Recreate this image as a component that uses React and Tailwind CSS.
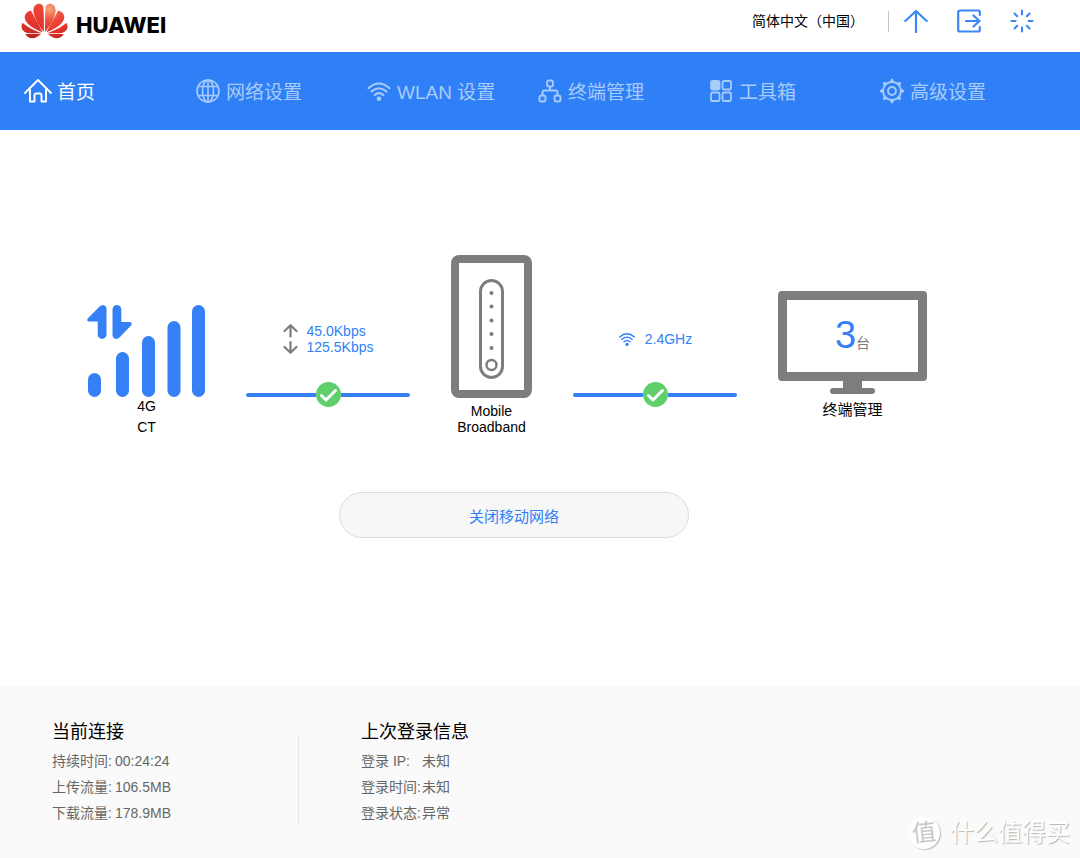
const navItems = [
  { label: '首页', icon: HomeIcon, active: true },
  { label: '网络设置', icon: GlobeIcon },
  { label: 'WLAN 设置', icon: WifiIcon },
  { label: '终端管理', icon: DevicesIcon },
  { label: '工具箱', icon: ToolboxIcon },
  { label: '高级设置', icon: GearIcon },
];

const currentConnection = [
  { label: '持续时间:', value: '00:24:24' },
  { label: '上传流量:', value: '106.5MB' },
  { label: '下载流量:', value: '178.9MB' },
];

const lastLogin = [
  { label: '登录 IP:', value: '未知' },
  { label: '登录时间:', value: '未知' },
  { label: '登录状态:', value: '异常' },
];

function HomeIcon() {
  return (
    <svg width="28" height="26" viewBox="0 0 28 26" fill="none" stroke="currentColor" strokeWidth="1.9" strokeLinecap="round" strokeLinejoin="round">
      <path d="M1 15 L14 2 L27 15" />
      <path d="M6 12 V23.5 H10.5 V17.5 Q10.5 15.5 12.3 15.5 H15.7 Q17.5 15.5 17.5 17.5 V23.5 H22 V12" />
    </svg>
  );
}

function GlobeIcon() {
  return (
    <svg width="26" height="26" viewBox="0 0 26 26" fill="none" stroke="currentColor" strokeWidth="1.6">
      <circle cx="13" cy="13" r="11" />
      <ellipse cx="13" cy="13" rx="5.5" ry="11" />
      <path d="M13 2 V24 M3.5 8.5 H22.5 M3.5 17.5 H22.5" />
    </svg>
  );
}

function WifiIcon({ size = 26 }) {
  return (
    <svg width={size} height={size} viewBox="0 0 26 26" fill="none" stroke="currentColor" strokeWidth="2" strokeLinecap="round">
      <path d="M2.5 10.2 Q13 0.8 23.5 10.2" />
      <path d="M5.5 13.6 Q13 7 20.5 13.6" />
      <path d="M8.6 17 Q13 13.2 17.4 17" />
      <circle cx="13" cy="20.8" r="2.3" fill="currentColor" stroke="none" />
    </svg>
  );
}

function DevicesIcon() {
  return (
    <svg width="26" height="26" viewBox="0 0 26 26" fill="none" stroke="currentColor" strokeWidth="1.9" strokeLinejoin="round">
      <rect x="10" y="2.5" width="6" height="6" rx="2" />
      <rect x="2.5" y="17.5" width="6" height="6" rx="2" />
      <rect x="17.5" y="17.5" width="6" height="6" rx="2" />
      <path d="M13 8.5 V12.5 M5.5 17.5 V14.5 Q5.5 12.5 7.5 12.5 H18.5 Q20.5 12.5 20.5 14.5 V17.5" />
    </svg>
  );
}

function ToolboxIcon() {
  return (
    <svg width="26" height="26" viewBox="0 0 26 26" fill="none" stroke="currentColor" strokeWidth="1.8">
      <rect x="3" y="3" width="8.5" height="8.5" rx="1.5" fill="currentColor" />
      <rect x="14.5" y="3" width="8.5" height="8.5" rx="1.5" />
      <rect x="3" y="14.5" width="8.5" height="8.5" rx="1.5" />
      <rect x="14.5" y="14.5" width="8.5" height="8.5" rx="1.5" />
    </svg>
  );
}

function GearIcon() {
  const teeth = [0, 45, 90, 135, 180, 225, 270, 315];
  return (
    <svg width="26" height="26" viewBox="0 0 26 26" fill="none" stroke="currentColor" strokeWidth="1.9">
      <circle cx="13" cy="13" r="9" />
      <circle cx="13" cy="13" r="4" />
      {teeth.map((angle) => (
        <path key={angle} d="M10.8 4 L12.2 0.8 H13.8 L15.2 4 Z" fill="currentColor" stroke="none" transform={`rotate(${angle} 13 13)`} />
      ))}
    </svg>
  );
}

function Logo() {
  const petals = [
    'M137 94 C136 62 137 32 139 17 Q142 8 152 9 C165 10 170 22 168 36 C163 58 151 77 137 94 Z',
    'M141 95 C152 72 166 48 176 29 Q194 34 195 50 C193 71 166 86 141 95 Z',
    'M142 98 C165 90 190 77 201 66 Q208 79 201 88 Q193 98 180 98 Z',
    'M146 100 H193 Q187 112 172 113 Q158 112 146 100 Z',
  ];
  return (
    <a href="#home" className="flex items-center gap-2" aria-label="HUAWEI">
      <svg width="47" height="36" viewBox="64 7 142 108">
        <defs>
          <radialGradient id="petal" gradientUnits="userSpaceOnUse" cx="151" cy="24" r="100">
            <stop offset="0" stopColor="#f7a877" />
            <stop offset="0.35" stopColor="#ee4f3c" />
            <stop offset="0.7" stopColor="#e5322b" />
            <stop offset="1" stopColor="#b9241f" />
          </radialGradient>
          <linearGradient id="petalLeft" gradientUnits="userSpaceOnUse" x1="140" y1="10" x2="160" y2="113">
            <stop offset="0" stopColor="#f04a3a" />
            <stop offset="0.7" stopColor="#e3302a" />
            <stop offset="1" stopColor="#b9241f" />
          </linearGradient>
        </defs>
        <g fill="url(#petal)">
          {petals.map((d) => <path key={d} d={d} />)}
        </g>
        <g fill="url(#petalLeft)" transform="translate(270 0) scale(-1 1)">
          {petals.map((d) => <path key={d} d={d} />)}
        </g>
      </svg>
      <span className="mt-2 font-['Inter',sans-serif] text-[22px] font-extrabold leading-6">HUAWEI</span>
    </a>
  );
}

function Header() {
  return (
    <header className="flex h-[52px] items-start justify-between pl-[21px] pr-[46px] pt-[3px]">
      <Logo />
      <div className="flex h-9 items-center">
        <button type="button" className="text-sm">简体中文（中国）</button>
        <span className="ml-6 mr-[15px] h-[21px] w-px bg-[#c4c4c4]" />
        <div className="flex items-center gap-[29px] text-[#3d87f5]">
          <button type="button" title="更新">
            <svg width="24" height="24" viewBox="0 0 24 24" fill="none" stroke="currentColor" strokeWidth="2.2" strokeLinecap="round" strokeLinejoin="round">
              <path d="M12 23 V2 M1.3 12 L12 2 L22.7 12" />
            </svg>
          </button>
          <button type="button" title="注销">
            <svg width="24" height="24" viewBox="0 0 24 24" fill="none" stroke="currentColor" strokeWidth="2.2" strokeLinecap="round" strokeLinejoin="round">
              <path d="M22.8 6 V3 Q22.8 1.5 21.3 1.5 H3 Q1.2 1.5 1.2 3.3 V20.7 Q1.2 22.5 3 22.5 H21.3 Q22.8 22.5 22.8 21 V18" />
              <path d="M9 12 H22.5 M16.5 6.5 L22.5 12 L16.5 17.5" />
            </svg>
          </button>
          <button type="button" title="加载">
            <svg width="24" height="24" viewBox="0 0 24 24" fill="none" stroke="currentColor" strokeWidth="2.1" strokeLinecap="round">
              <path d="M12 1.5 V5.5 M12 18.5 V22.5 M1.5 12 H5.5 M18.5 12 H22.5 M4.5 4.5 L7.2 7.2 M16.8 16.8 L19.5 19.5 M4.5 19.5 L7.2 16.8 M16.8 7.2 L19.5 4.5" />
            </svg>
          </button>
        </div>
      </div>
    </header>
  );
}

function Nav() {
  return (
    <nav className="grid h-[78px] grid-cols-6 items-center bg-[#2f80f7] pl-6 pr-[30px]">
      {navItems.map(({ label, icon: Icon, active }) => (
        <a
          key={label}
          href={`#${label}`}
          className={`flex items-center gap-[5px] whitespace-nowrap text-[19px] leading-7 ${
            active ? 'text-white' : 'text-[#a9cbfc]'
          }`}
        >
          <Icon />
          <span className="pt-[3px]">{label}</span>
        </a>
      ))}
    </nav>
  );
}

function Signal() {
  return (
    <svg width="117" height="93" viewBox="0 0 117 93" fill="#3580f4" className="overflow-visible">
      <rect x="0" y="68" width="13" height="24" rx="6.5" />
      <rect x="28" y="47" width="13" height="45" rx="6.5" />
      <rect x="54" y="31" width="13" height="61" rx="6.5" />
      <rect x="79.5" y="16" width="13" height="76" rx="6.5" />
      <rect x="104" y="0" width="13" height="92" rx="6.5" />
      <path d="M18.5 4 V29.5 A4.4 4.4 0 0 1 9.7 29.5 V16.5 H1 Q-2 16 0 13.2 L11 2 Q13 0 15 0 Q18.5 0.5 18.5 4 Z" />
      <path d="M24.5 4.4 A4.4 4.4 0 0 1 33.3 4.4 V17 H42 Q45 18 43 20.5 L32 32 Q30 34 28 34 Q24.5 33 24.5 30 Z" />
    </svg>
  );
}

function Router() {
  return (
    <svg width="81" height="143" viewBox="0 0 81 143" fill="none" stroke="#7d7d7d">
      <rect x="4" y="4" width="73" height="135" rx="4" strokeWidth="8" />
      <rect x="29.5" y="25.5" width="22" height="97" rx="11" strokeWidth="3" />
      <circle cx="40.5" cy="110" r="5" strokeWidth="2.4" />
      <g fill="#7d7d7d" stroke="none">
        <circle cx="40.5" cy="38" r="2" />
        <circle cx="40.5" cy="51.5" r="2" />
        <circle cx="40.5" cy="65.5" r="2" />
        <circle cx="40.5" cy="79" r="2" />
        <circle cx="40.5" cy="93" r="2" />
      </g>
    </svg>
  );
}

function Monitor({ count }) {
  return (
    <div className="relative">
      <svg width="149" height="107" viewBox="0 0 149 107" fill="#7d7d7d">
        <path fillRule="evenodd" d="M4 0 H145 Q149 0 149 4 V86 Q149 90 145 90 H4 Q0 90 0 86 V4 Q0 0 4 0 Z M9 9 V81 H140 V9 Z" />
        <rect x="65" y="89" width="19" height="10" />
        <rect x="52" y="97" width="45" height="6" rx="3" />
      </svg>
      <div className="absolute inset-x-0 top-0 flex h-[90px] items-baseline justify-center pt-6 leading-10">
        <span className="text-[38px] text-[#3580f4]">{count}</span>
        <span className="text-sm text-[#7d7d7d]">台</span>
      </div>
    </div>
  );
}

function Link({ children }) {
  return (
    <div className="flex-1 pt-[68px]">
      <div className="flex h-8 items-center justify-center gap-[9px] text-sm leading-4 text-[#2f80f7]">
        {children}
      </div>
      <div className="mt-[27px] flex items-center">
        <span className="h-1 flex-1 rounded-l-full bg-[#3580f4]" />
        <svg width="25" height="25" viewBox="0 0 25 25" fill="none">
          <circle cx="12.5" cy="12.5" r="12.5" fill="#5fcf6b" />
          <path d="M5.5 13.5 L10 18 L19.5 8.5" stroke="#fff" strokeWidth="3" strokeLinecap="round" strokeLinejoin="round" />
        </svg>
        <span className="h-1 flex-1 rounded-r-full bg-[#3580f4]" />
      </div>
    </div>
  );
}

function Device({ picture, children }) {
  return (
    <div className="flex shrink-0 flex-col items-center text-center">
      <div className="flex h-[143px] items-end">{picture}</div>
      {children}
    </div>
  );
}

function InfoList({ title, rows, labelClass }) {
  return (
    <section>
      <h2 className="text-lg leading-7">{title}</h2>
      <dl className="mt-[2px] text-sm leading-[26px] text-[#666]">
        {rows.map(({ label, value }) => (
          <div key={label} className="flex">
            <dt className={labelClass}>{label}</dt>
            <dd>{value}</dd>
          </div>
        ))}
      </dl>
    </section>
  );
}

export default function App() {
  return (
    <div className="relative flex min-h-screen flex-col bg-white font-['Liberation_Sans','Noto_Sans_CJK_SC',sans-serif] text-black">
      <Header />
      <Nav />

      <main className="flex-1 pt-[125px]">
        <div className="flex items-start gap-[41px] pl-[88px] pr-[153px]">
          <Device picture={<Signal />}>
            <p className="text-sm leading-4">4G</p>
            <p className="mt-[5px] text-sm leading-4">CT</p>
          </Device>

          <Link>
            <svg width="15" height="32" viewBox="0 0 15 32" fill="none" stroke="#7d7d7d" strokeWidth="2.2" strokeLinecap="round" strokeLinejoin="round">
              <path d="M7.5 13.5 V2.5 M1.5 8 L7.5 2.2 L13.5 8" />
              <path d="M7.5 19 V29.5 M1.5 24 L7.5 29.8 L13.5 24" />
            </svg>
            <div>
              <p>45.0Kbps</p>
              <p>125.5Kbps</p>
            </div>
          </Link>

          <Device picture={<Router />}>
            <p className="mt-[5px] text-sm leading-4">Mobile<br />Broadband</p>
          </Device>

          <Link>
            <WifiIcon size={18} />
            <span>2.4GHz</span>
          </Link>

          <Device picture={<Monitor count={3} />}>
            <p className="text-[15px] leading-6">终端管理</p>
          </Device>
        </div>

        <div className="mt-[57px] flex justify-center pr-[52px]">
          <button type="button" className="h-[46px] w-[350px] rounded-full border border-[#dcdcdc] bg-[#f7f7f7] pt-1 text-[15px] text-[#2f80f7]">
            关闭移动网络
          </button>
        </div>
      </main>

      <footer className="flex bg-[#fafafa] pb-8 pl-[52px] pt-8">
        <div className="w-[246px]">
          <InfoList title="当前连接" rows={currentConnection} labelClass="w-[63px]" />
        </div>
        <div className="mt-4 w-px bg-[#e6e6e6]" />
        <div className="pl-[62px]">
          <InfoList title="上次登录信息" rows={lastLogin} labelClass="w-[61px]" />
        </div>
      </footer>

      <div className="absolute bottom-[9px] right-[10px] flex items-center gap-[10px]">
        <span className="flex h-8 w-8 -rotate-6 items-center justify-center rounded-full bg-white text-2xl leading-8 text-[#c8c8c8] shadow-[1px_1px_1px_#bdbdbd]">值</span>
        <span className="text-2xl leading-8 text-white [text-shadow:1px_1px_1px_#b5b5b5]">什么值得买</span>
      </div>
    </div>
  );
}
